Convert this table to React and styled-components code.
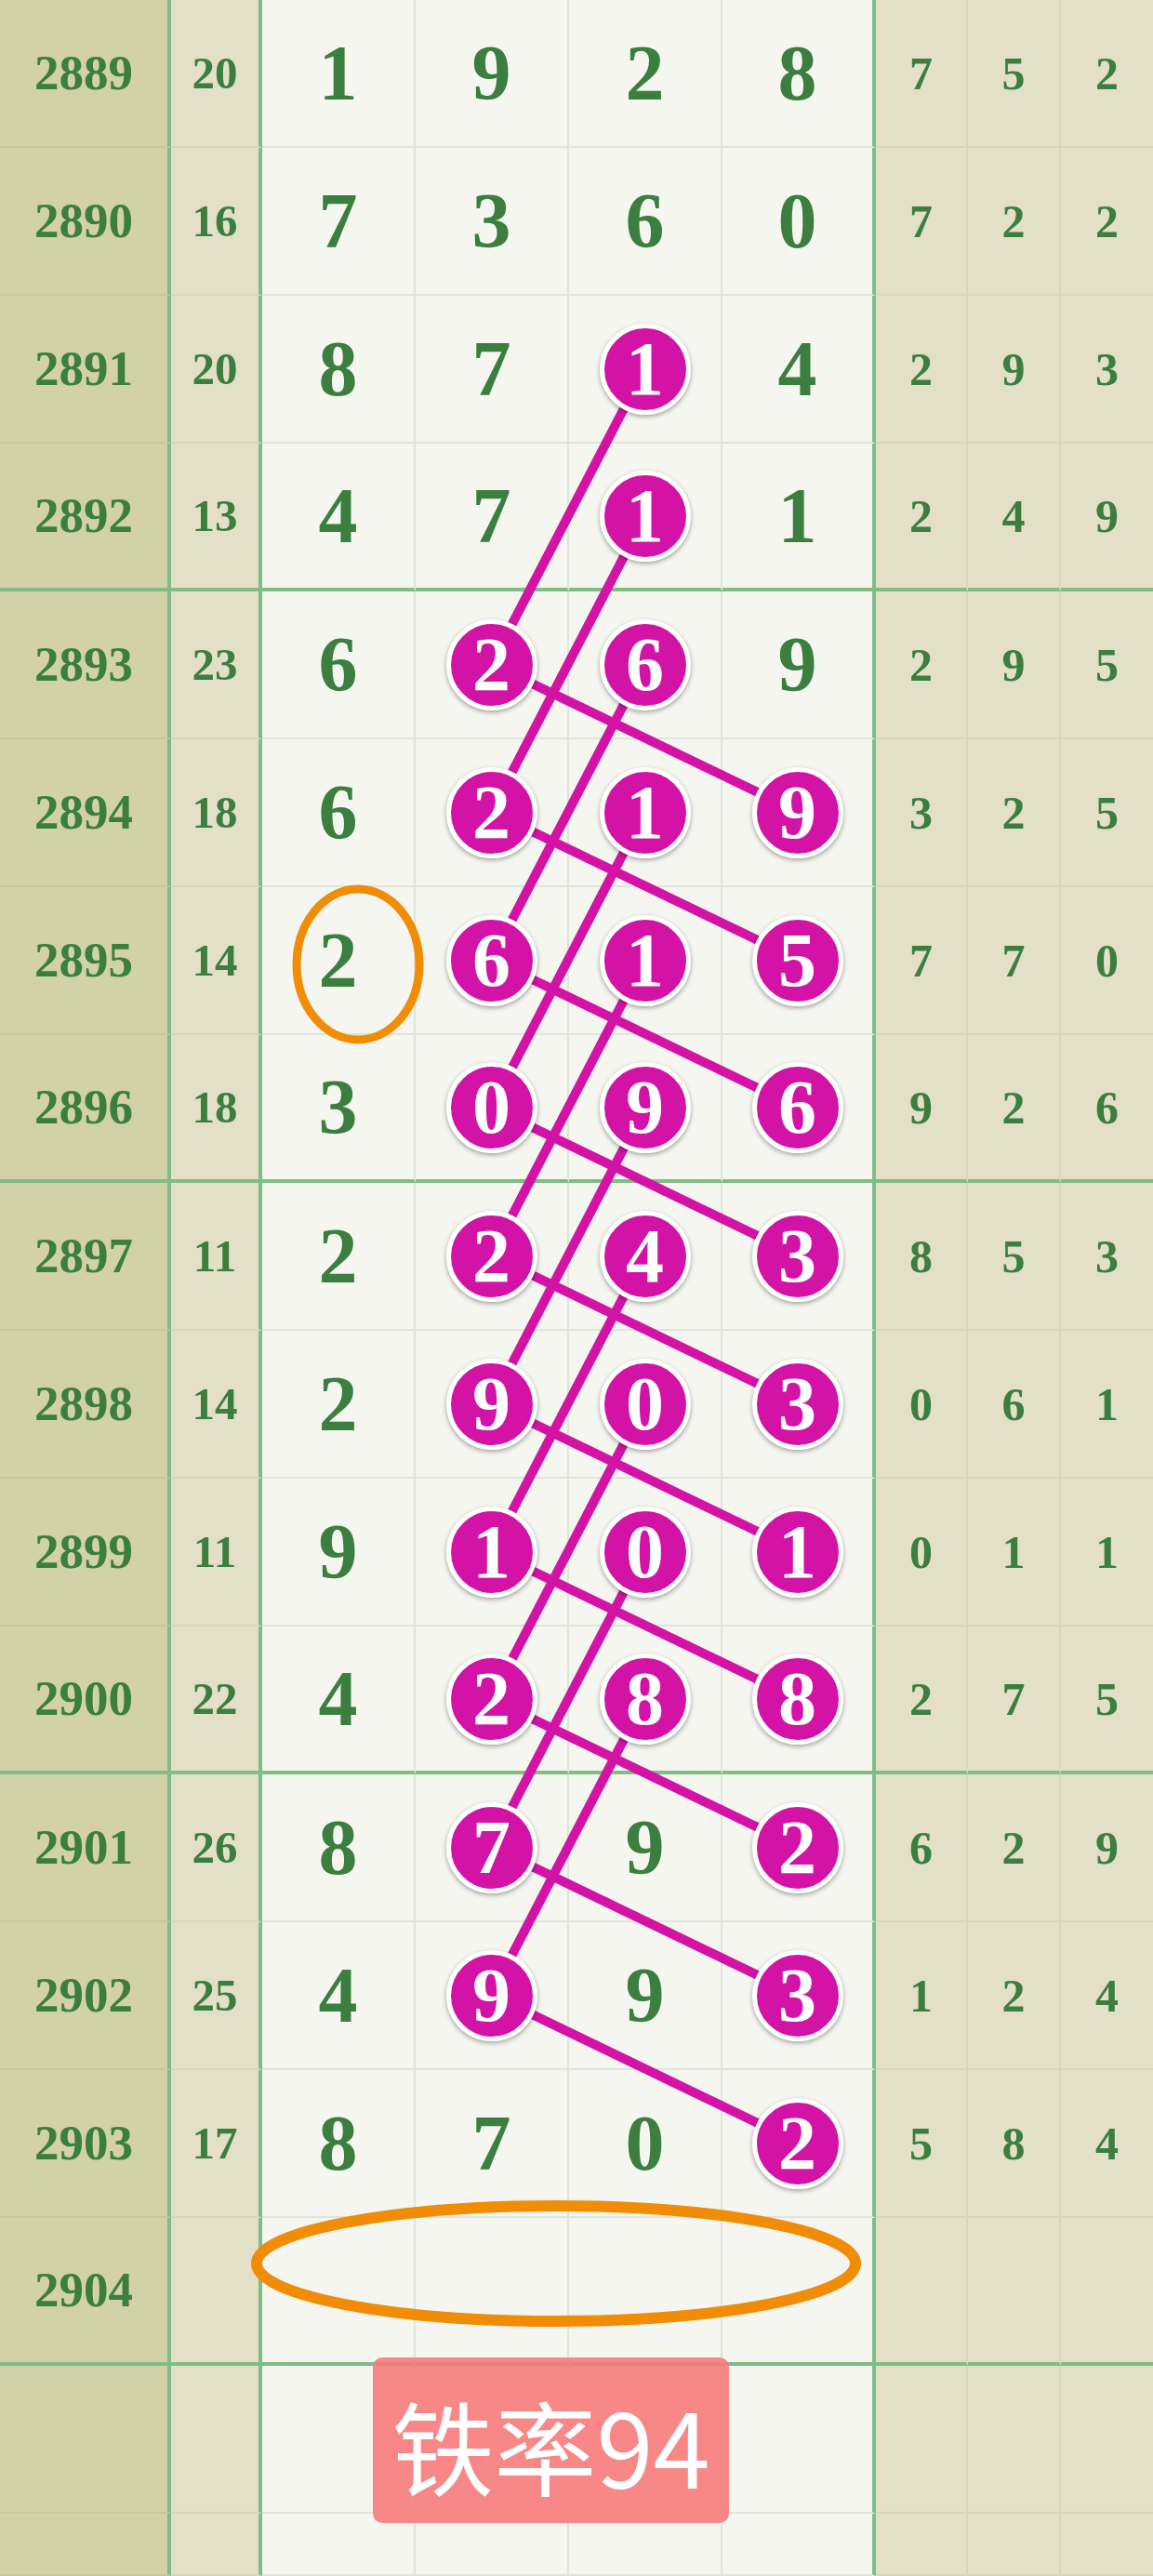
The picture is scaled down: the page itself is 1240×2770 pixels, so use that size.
import React from 'react'
import styled, { createGlobalStyle } from 'styled-components'

const ROW_H = 159
const WIDTHS = [184, 98, 165, 165, 165, 165, 99, 100, 99]
const GREEN = '#80bd86'
const MAGENTA = '#d313a6'
const ORANGE = '#f08c05'

const bg = { period: '#d3d1a8', sum: '#e4dfc7', main: '#f5f6f0', side: '#e4dfc7' }
const thin = { period: '#c6c99f', sum: '#d6d7bd', main: '#dee5db', side: '#d4d8bb' }
const sizes = { period: 53, sum: 49, main: 84, side: 50 }

const rows = [
  ['2889', '20', [1, 9, 2, 8], [7, 5, 2]],
  ['2890', '16', [7, 3, 6, 0], [7, 2, 2]],
  ['2891', '20', [8, 7, 1, 4], [2, 9, 3]],
  ['2892', '13', [4, 7, 1, 1], [2, 4, 9]],
  ['2893', '23', [6, 2, 6, 9], [2, 9, 5]],
  ['2894', '18', [6, 2, 1, 9], [3, 2, 5]],
  ['2895', '14', [2, 6, 1, 5], [7, 7, 0]],
  ['2896', '18', [3, 0, 9, 6], [9, 2, 6]],
  ['2897', '11', [2, 2, 4, 3], [8, 5, 3]],
  ['2898', '14', [2, 9, 0, 3], [0, 6, 1]],
  ['2899', '11', [9, 1, 0, 1], [0, 1, 1]],
  ['2900', '22', [4, 2, 8, 8], [2, 7, 5]],
  ['2901', '26', [8, 7, 9, 2], [6, 2, 9]],
  ['2902', '25', [4, 9, 9, 3], [1, 2, 4]],
  ['2903', '17', [8, 7, 0, 2], [5, 8, 4]],
  ['2904', '', ['', '', '', ''], ['', '', '']],
  ['', '', ['', '', '', ''], ['', '', '']],
  ['', '', ['', '', '', ''], ['', '', '']],
]

// which main-column numbers are circled
const isBall = (r, c) =>
  (c === 1 && r >= 4 && r <= 13) ||
  (c === 2 && r >= 2 && r <= 11) ||
  (c === 3 && r >= 5 && r <= 14)

const colLeft = i => WIDTHS.slice(0, i).reduce((a, b) => a + b, 0)
const mainX = c => colLeft(2 + c) + (WIDTHS[2 + c] - 2) / 2
const rowY = r => r * ROW_H + 78

const links = []
for (let r = 2; r <= 11; r++) links.push([2, r, 1, r + 2])
for (let r = 4; r <= 13; r++) links.push([1, r, 3, r + 1])

const GlobalStyle = createGlobalStyle`
  html, body { margin: 0; padding: 0; background: #f5f6f0; }
  body { font-family: "Liberation Serif", "Times New Roman", serif; }
`

const Board = styled.div`
  position: relative;
  width: 1240px;
  height: 2770px;
  overflow: hidden;
`

const Row = styled.div`
  display: grid;
  grid-template-columns: ${WIDTHS.map(w => w + 'px').join(' ')};
  height: ${p => p.$h}px;
`

const Cell = styled.div`
  box-sizing: border-box;
  display: flex;
  align-items: center;
  justify-content: center;
  background: ${p => bg[p.$kind]};
  border-right: ${p =>
    p.$edge === 'thick' ? `4px solid ${GREEN}` : p.$edge === 'thin' ? `2px solid ${thin[p.$kind]}` : 'none'};
  border-bottom: ${p => (p.$thick ? `4px solid ${GREEN}` : `2px solid ${thin[p.$kind]}`)};
  color: #3b7e40;
  font-weight: bold;
  font-size: ${p => sizes[p.$kind]}px;
  line-height: 1;
`

const Ball = styled.span`
  position: relative;
  z-index: 2;
  box-sizing: border-box;
  width: 98px;
  height: 98px;
  border-radius: 50%;
  background: ${MAGENTA};
  border: 5px solid #fff;
  box-shadow: 0 2px 5px rgba(0, 0, 0, 0.35);
  color: #fff;
  display: flex;
  align-items: center;
  justify-content: center;
  font-size: 82px;
  line-height: 1;
`

const Overlay = styled.svg`
  position: absolute;
  left: 0;
  top: 0;
  z-index: 1;
  pointer-events: none;
`

const Badge = styled.div`
  position: absolute;
  left: 401px;
  top: 2535px;
  width: 383px;
  height: 178px;
  z-index: 3;
  border-radius: 10px;
  background: rgba(248, 118, 118, 0.86);
  color: #fff;
  display: flex;
  align-items: center;
  justify-content: center;
  font-family: "Noto Sans CJK SC", "Noto Sans", sans-serif;
  font-size: 110px;
  line-height: 1;
  padding-top: 8px;
  box-sizing: border-box;
`

export default function App() {
  return (
    <>
      <GlobalStyle />
      <Board>
        {rows.map(([period, sum, main, side], r) => {
          const thick = r % 4 === 3 && r < 16
          const h = r === 17 ? 67 : ROW_H
          return (
            <Row key={r} $h={h}>
              <Cell $kind="period" $edge="thick" $thick={thick}>{period}</Cell>
              <Cell $kind="sum" $edge="thick" $thick={thick}>{sum}</Cell>
              {main.map((n, c) => (
                <Cell key={'m' + c} $kind="main" $edge={c === 3 ? 'thick' : 'thin'} $thick={thick}>
                  {isBall(r, c) ? <Ball>{n}</Ball> : n}
                </Cell>
              ))}
              {side.map((n, c) => (
                <Cell key={'s' + c} $kind="side" $edge={c === 2 ? 'none' : 'thin'} $thick={thick}>{n}</Cell>
              ))}
            </Row>
          )
        })}
        <Overlay width="1240" height="2770" viewBox="0 0 1240 2770">
          {links.map(([c1, r1, c2, r2], i) => (
            <line
              key={i}
              x1={mainX(c1)}
              y1={rowY(r1)}
              x2={mainX(c2)}
              y2={rowY(r2)}
              stroke={MAGENTA}
              strokeWidth="10"
            />
          ))}
          <ellipse cx="385" cy="1037" rx="66" ry="81" fill="none" stroke={ORANGE} strokeWidth="9" />
          <ellipse cx="598" cy="2434" rx="322" ry="62" fill="none" stroke={ORANGE} strokeWidth="12" />
        </Overlay>
        <Badge>铁率94</Badge>
      </Board>
    </>
  )
}
